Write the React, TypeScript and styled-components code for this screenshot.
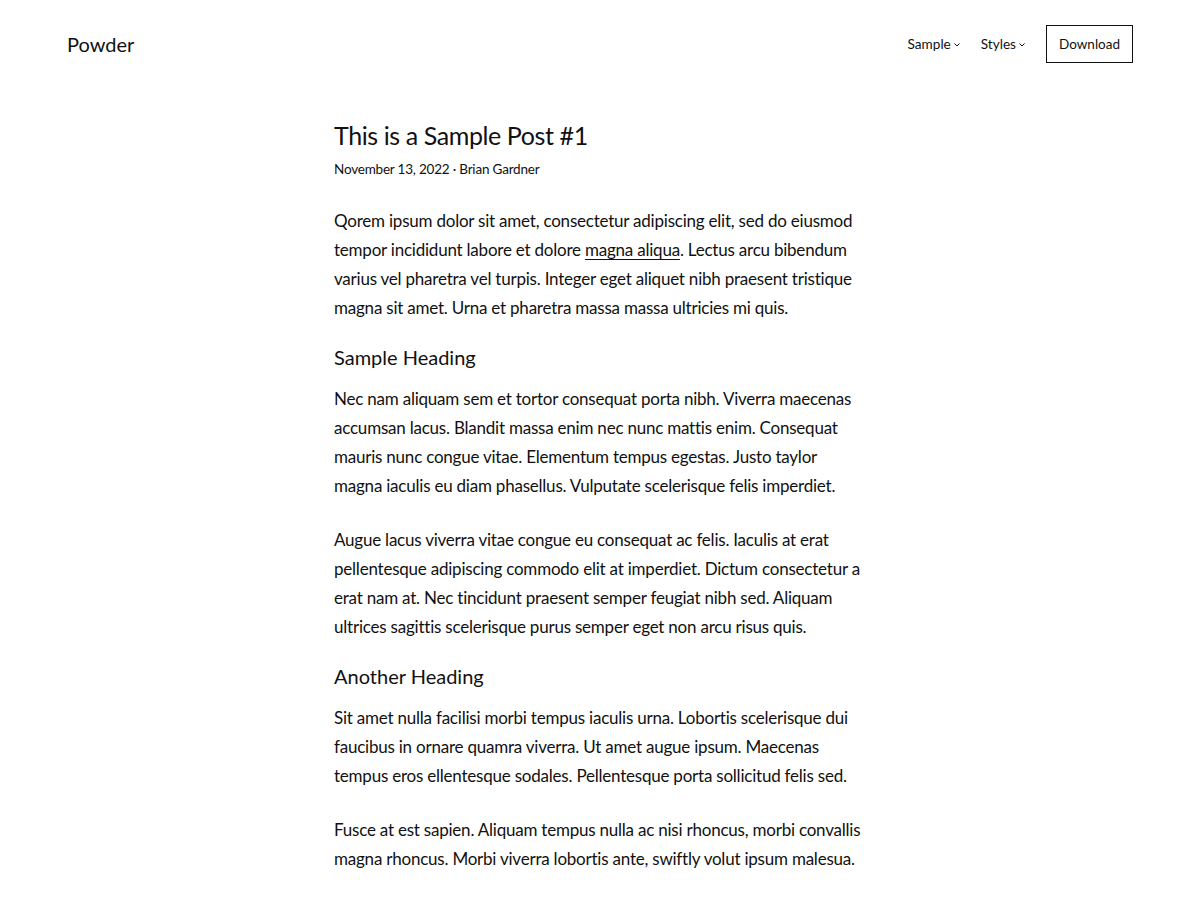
import React from "react";
import styled, { createGlobalStyle } from "styled-components";

const Global = createGlobalStyle`
  html, body { margin: 0; padding: 0; background: #fff; }
  body {
    font-family: "Lato", "Noto Sans", sans-serif;
    color: #111;
    -webkit-font-smoothing: antialiased;
  }
`;

const Page = styled.div`
  min-height: 900px;
  background: #fff;
`;

const Header = styled.header`
  display: flex;
  align-items: center;
  justify-content: space-between;
  padding: 25px 67px 0 67px;
  height: 38px;
`;

const Logo = styled.div`
  font-size: 20px;
  font-weight: 400;
`;

const Nav = styled.nav`
  display: flex;
  align-items: center;
  gap: 21px;
`;

const NavItem = styled.span`
  display: inline-flex;
  align-items: center;
  gap: 3px;
  font-size: 13.6px;

  svg { margin-top: 2px; }
`;

const Button = styled.button`
  font-family: inherit;
  font-size: 13.5px;
  color: #111;
  background: #fff;
  border: 1px solid #111;
  height: 38px;
  padding: 0 12px;
  cursor: pointer;
`;

const Article = styled.article`
  width: 532px;
  margin: 0 auto;
  padding-top: 55px;
`;

const Title = styled.h1`
  font-size: 25px;
  font-weight: 400;
  letter-spacing: -0.4px;
  line-height: 34px;
  margin: 0;
`;

const Meta = styled.div`
  font-size: 13.5px;
  letter-spacing: -0.2px;
  line-height: 20px;
  margin-top: 7px;
`;

const Paragraph = styled.p`
  font-size: 17px;
  letter-spacing: -0.22px;
  line-height: 29px;
  margin: 0;
  & + & { margin-top: 25px; }
`;

const Body = styled.div`
  margin-top: 27px;
`;

const Heading = styled.h2`
  font-size: 20px;
  font-weight: 400;
  line-height: 28px;
  margin: 21px 0 13px;
`;

const Link = styled.a`
  color: inherit;
  text-decoration: underline;
  text-underline-offset: 3px;
  text-decoration-thickness: 1px;
`;

const Chevron = () => (
  <svg width="6" height="6" viewBox="0 0 6 6" fill="none" stroke="#111" strokeWidth="1">
    <path d="M0.5 1.5L3 4l2.5-2.5" />
  </svg>
);

export default function App() {
  return (
    <Page>
      <Global />
      <Header>
        <Logo>Powder</Logo>
        <Nav>
          <NavItem>Sample <Chevron /></NavItem>
          <NavItem>Styles <Chevron /></NavItem>
          <Button>Download</Button>
        </Nav>
      </Header>
      <Article>
        <Title>This is a Sample Post #1</Title>
        <Meta>November 13, 2022 · Brian Gardner</Meta>
        <Body>
          <Paragraph>
            Qorem ipsum dolor sit amet, consectetur adipiscing elit, sed do eiusmod tempor incididunt labore et dolore{" "}
            <Link href="#">magna aliqua</Link>. Lectus arcu bibendum varius vel pharetra vel turpis. Integer eget aliquet nibh praesent tristique magna sit amet. Urna et pharetra massa massa ultricies mi quis.
          </Paragraph>
          <Heading>Sample Heading</Heading>
          <Paragraph>
            Nec nam aliquam sem et tortor consequat porta nibh. Viverra maecenas accumsan lacus. Blandit massa enim nec nunc mattis enim. Consequat mauris nunc congue vitae. Elementum tempus egestas. Justo taylor magna iaculis eu diam phasellus. Vulputate scelerisque felis imperdiet.
          </Paragraph>
          <Paragraph>
            Augue lacus viverra vitae congue eu consequat ac felis. Iaculis at erat pellentesque adipiscing commodo elit at imperdiet. Dictum consectetur a erat nam at. Nec tincidunt praesent semper feugiat nibh sed. Aliquam ultrices sagittis scelerisque purus semper eget non arcu risus quis.
          </Paragraph>
          <Heading>Another Heading</Heading>
          <Paragraph>
            Sit amet nulla facilisi morbi tempus iaculis urna. Lobortis scelerisque dui faucibus in ornare quamra viverra. Ut amet augue ipsum. Maecenas tempus eros ellentesque sodales. Pellentesque porta sollicitud felis sed.
          </Paragraph>
          <Paragraph>
            Fusce at est sapien. Aliquam tempus nulla ac nisi rhoncus, morbi convallis magna rhoncus. Morbi viverra lobortis ante, swiftly volut ipsum malesua.
          </Paragraph>
        </Body>
      </Article>
    </Page>
  );
}
